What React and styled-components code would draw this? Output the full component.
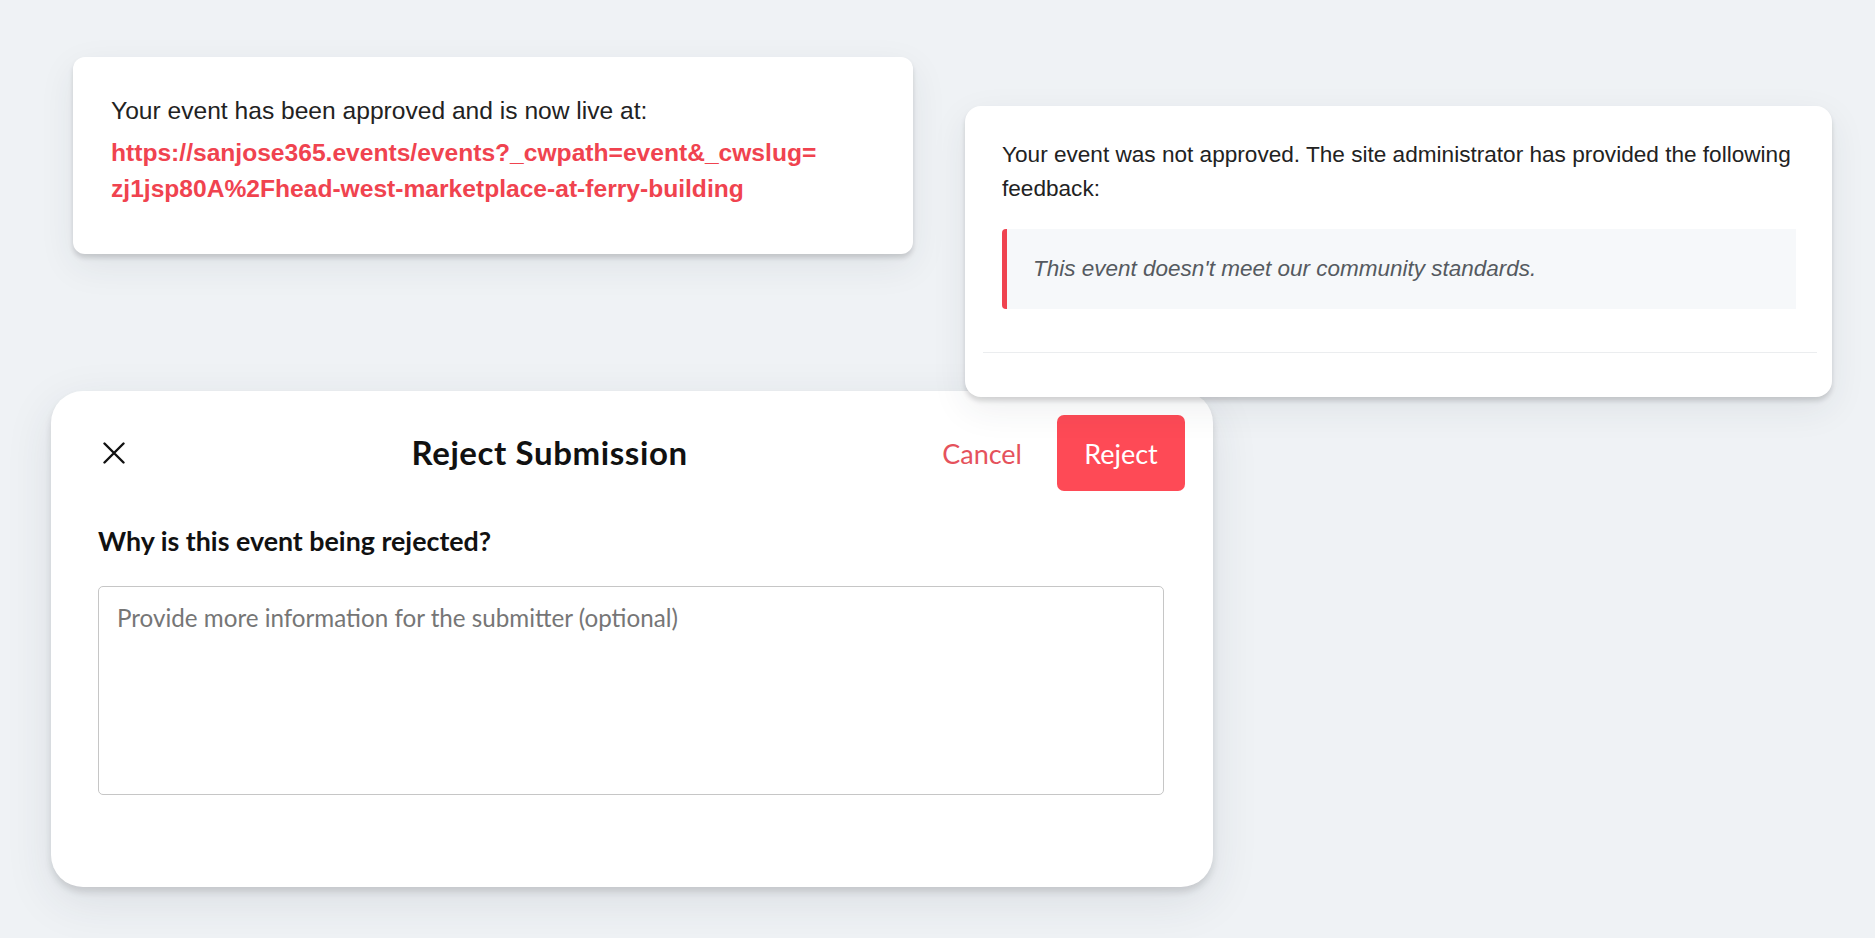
import React from "react";
import styled, { createGlobalStyle } from "styled-components";

const GlobalStyle = createGlobalStyle`
  html, body { margin: 0; padding: 0; }
  body { background: #eff2f5; }
  * { box-sizing: border-box; }
`;

const Page = styled.div`
  width: 1875px;
  height: 938px;
  overflow: hidden;
  background: #eff2f5;
  display: flex;
  flex-direction: column;
`;

const TopRow = styled.div`
  display: flex;
  align-items: flex-start;
  gap: 52px;
  padding-left: 73px;
`;

const NoticeCard = styled.div`
  position: relative;
  z-index: 2;
  background: #fff;
  border-radius: ${(p) => p.$radius}px;
  margin-top: ${(p) => p.$top}px;
  width: ${(p) => p.$width}px;
  box-shadow: 0 4px 5px rgba(0, 0, 0, 0.14), 0 12px 36px rgba(40, 50, 70, 0.08);
  font-family: "Liberation Sans", Arial, Helvetica, sans-serif;
  color: #222;
`;

const ApprovedBody = styled.div`
  padding: 35.5px 40px 48px 38px;
  font-size: 24.6px;
  line-height: 1.45;
`;

const Para = styled.p`
  margin: 0;
`;

const LiveLink = styled.a`
  display: block;
  margin-top: 7px;
  color: #f0434f;
  font-weight: 700;
  text-decoration: none;
  white-space: nowrap;
`;

const RejectedBody = styled.div`
  padding: 32px 36px 43px 37px;
  font-size: 22.6px;
  line-height: 1.5;
`;

const Quote = styled.blockquote`
  margin: 23px 0 0 0;
  background: #f6f8fa;
  border-left: 5px solid #ef424f;
  border-radius: 4px 0 0 4px;
  padding: 24px 24px 24px 26px;
  font-size: 22.5px;
  line-height: 32px;
  font-style: italic;
  color: #555a60;
`;

const Divider = styled.div`
  height: 1px;
  background: #ebedef;
  margin: 0 15px 0 18px;
`;

const CardFooter = styled.div`
  height: 44px;
`;

const Modal = styled.div`
  position: relative;
  z-index: 1;
  width: 1162px;
  height: 496px;
  margin: -5.5px 0 0 51px;
  background: #fff;
  border-radius: 32px;
  box-shadow: 0 5px 7px rgba(0, 0, 0, 0.12), 0 14px 48px rgba(40, 50, 70, 0.1);
  font-family: Lato, "Noto Sans", sans-serif;
  color: #111;
  display: flex;
  flex-direction: column;
`;

const Header = styled.div`
  display: flex;
  align-items: center;
  padding: 24px 28px 0 52px;
`;

const CloseButton = styled.button`
  border: 0;
  background: none;
  padding: 0;
  width: 22px;
  height: 22px;
  display: flex;
  align-items: center;
  justify-content: center;
  cursor: pointer;
  color: #111;
`;

const Title = styled.h2`
  flex: 1;
  margin: -3px 0 0 32px;
  text-align: center;
  font-size: 33px;
  font-weight: 700;
  letter-spacing: 0.6px;
`;

const CancelButton = styled.button`
  border: 0;
  background: none;
  padding: 0;
  margin-right: 35px;
  font-family: Lato, "Noto Sans", sans-serif;
  font-size: 27px;
  color: #e5525c;
  cursor: pointer;
`;

const RejectButton = styled.button`
  border: 0;
  width: 128px;
  height: 76px;
  border-radius: 7px;
  background: #fe4a56;
  color: #fff;
  font-family: Lato, "Noto Sans", sans-serif;
  font-size: 27px;
  cursor: pointer;
`;

const Body = styled.div`
  padding: 34px 49px 0 47px;
  display: flex;
  flex-direction: column;
`;

const Label = styled.label`
  font-size: 26.8px;
  font-weight: 700;
  line-height: 1.2;
`;

const TextArea = styled.textarea`
  margin-top: 29px;
  width: 100%;
  height: 209px;
  border: 1.5px solid #c6c6c6;
  border-radius: 5px;
  padding: 15px 18px;
  resize: none;
  font-family: Lato, "Noto Sans", sans-serif;
  font-size: 24.2px;
  line-height: 1.35;
  color: #333;
  &::placeholder {
    color: #767676;
  }
`;

const CloseIcon = () => (
  <svg width="22" height="22" viewBox="0 0 22 22" fill="none">
    <path d="M1.5 1.5 L20.5 20.5 M20.5 1.5 L1.5 20.5" stroke="#111" strokeWidth="2.4" strokeLinecap="round" />
  </svg>
);

export default function App() {
  return (
    <>
      <GlobalStyle />
      <Page>
        <TopRow>
          <NoticeCard $width={840} $top={57} $radius={12}>
            <ApprovedBody>
              <Para>Your event has been approved and is now live at:</Para>
              <LiveLink href="#">
                https://sanjose365.events/events?_cwpath=event&amp;_cwslug=
                <br />
                zj1jsp80A%2Fhead-west-marketplace-at-ferry-building
              </LiveLink>
            </ApprovedBody>
          </NoticeCard>
          <NoticeCard $width={867} $top={106} $radius={16}>
            <RejectedBody>
              <Para>
                Your event was not approved. The site administrator has provided the following feedback:
              </Para>
              <Quote>This event doesn't meet our community standards.</Quote>
            </RejectedBody>
            <Divider />
            <CardFooter />
          </NoticeCard>
        </TopRow>
        <Modal>
          <Header>
            <CloseButton aria-label="Close">
              <CloseIcon />
            </CloseButton>
            <Title>Reject Submission</Title>
            <CancelButton>Cancel</CancelButton>
            <RejectButton>Reject</RejectButton>
          </Header>
          <Body>
            <Label>Why is this event being rejected?</Label>
            <TextArea placeholder="Provide more information for the submitter (optional)" />
          </Body>
        </Modal>
      </Page>
    </>
  );
}
